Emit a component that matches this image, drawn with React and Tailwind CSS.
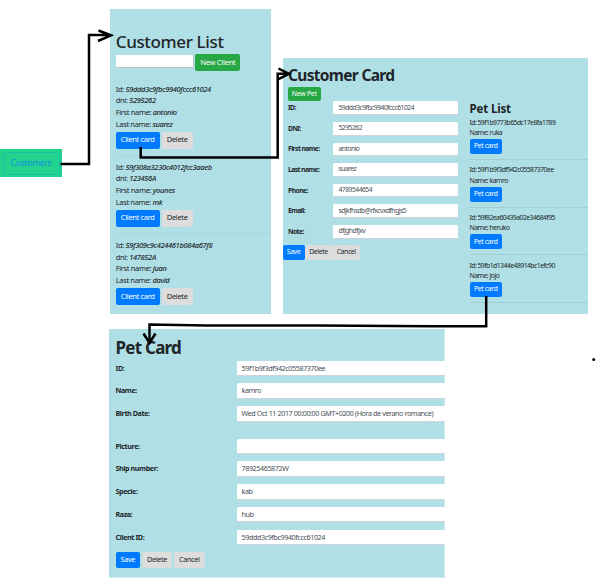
import React from 'react';

const customers = [
  { id: '59ddd3c9fbc9940fccc61024', dni: '5295262', first: 'antonio', last: 'suarez' },
  { id: '59f308a3230c4012fcc3aaeb', dni: '123456A', first: 'younes', last: 'mk' },
  { id: '59f309c9c424461b084a67f8', dni: '147852A', first: 'juan', last: 'david' },
];

const customerFields = [
  ['ID:', '59ddd3c9fbc9940fccc61024'],
  ['DNI:', '5295262'],
  ['First name:', 'antonio'],
  ['Last name:', 'suarez'],
  ['Phone:', '4789544654'],
  ['Email:', 'sdjkfhsdb@rfxcvxdfhgjs5'],
  ['Note:', 'dfjghdfjxv'],
];

const pets = [
  ['59f1b9773b65dc17e8fa1789', 'ruka'],
  ['59f1b9f3df942c05587370ee', 'kamro'],
  ['59f82ea60439a02e34684f95', 'heruko'],
  ['59fb1d1344e48914bc1efc90', 'jojo'],
];

const petFields = [
  ['ID:', '59f1b9f3df942c05587370ee'],
  ['Name:', 'kamro'],
  ['Birth Date:', 'Wed Oct 11 2017 00:00:00 GMT+0200 (Hora de verano romance)'],
  ['Picture:', ''],
  ['Ship number:', '78925465872W'],
  ['Specie:', 'kab'],
  ['Raza:', 'hub'],
  ['Client ID:', '59ddd3c9fbc9940fccc61024'],
];

const tones = {
  blue: 'bg-[#007bff] text-white',
  green: 'bg-[#28a745] text-white',
  gray: 'bg-[#dddddd] text-[#212529]',
};

function Button({ tone, className, children }) {
  return (
    <button className={`flex shrink-0 items-center justify-center rounded-[2px] whitespace-nowrap ${tones[tone]} ${className}`}>
      {children}
    </button>
  );
}

function CustomerList() {
  return (
    <section className="absolute left-[110px] top-[9px] h-[305px] w-[161px] bg-[#b0e0e6] pl-[5.7px] text-[7.5px]">
      <h1 className="mt-[19.5px] h-[25.5px] text-[17px] leading-[25px] font-medium tracking-[-0.35px] whitespace-nowrap">Customer List</h1>
      <div className="flex items-start gap-[1.7px]">
        <input className="mt-[1px] h-[13px] w-[78px] border-r border-b border-[#b9c2c4] bg-white outline-none" />
        <Button tone="green" className="h-[17px] w-[45px] tracking-[-0.25px]">New Client</Button>
      </div>
      <div className="mt-[12.5px]">
        {customers.map((c) => (
          <article key={c.id} className="h-[78.2px] leading-[11.8px] whitespace-nowrap tracking-[-0.34px] last:h-[66px] last:overflow-hidden">
            <p>Id: <i className="font-medium">{c.id}</i></p>
            <p>dni: <i className="font-medium">{c.dni}</i></p>
            <p>First name: <i className="font-medium">{c.first}</i></p>
            <p>Last name: <i className="font-medium">{c.last}</i></p>
            <div className="mt-[1px] flex gap-[2px]">
              <Button tone="blue" className="h-[17px] w-[44px]">Client card</Button>
              <Button tone="gray" className="h-[17px] w-[31px]">Delete</Button>
            </div>
            <hr className="mt-[6.5px] border-[#a8d8de]" />
          </article>
        ))}
      </div>
    </section>
  );
}

function CustomerCard() {
  return (
    <section className="absolute left-[282.5px] top-[58px] h-[256px] w-[305.5px] bg-[#b0e0e6] text-[6.8px]">
      <h1 className="h-[28.5px] pt-[6px] pl-[5.5px] text-[15.5px] leading-[22px] font-bold whitespace-nowrap tracking-[-0.68px]">Customer Card</h1>
      <div className="flex">
        <div className="w-[187px]">
          <Button tone="green" className="ml-[5.5px] h-[14.7px] w-[32.5px] tracking-[-0.2px]">New Pet</Button>
          <div className="mt-[0.3px] flex flex-col gap-[7.1px]">
            {customerFields.map(([label, value]) => (
              <label key={label} className="flex h-[13.5px] items-center pl-[5.5px]">
                <span className="w-[45px] shrink-0 font-bold tracking-[-0.58px] whitespace-nowrap">{label}</span>
                <span className="flex h-[13.5px] w-[124.5px] items-center rounded-[1.5px] border-b border-[#ced4da] bg-white pl-[5.5px] tracking-[-0.53px] text-[#495057]">{value}</span>
              </label>
            ))}
          </div>
          <div className="mt-[6.2px] flex">
            <Button tone="blue" className="h-[15px] w-[22.3px] tracking-[-0.25px]">Save</Button>
            <Button tone="gray" className="h-[15px] w-[27.5px] tracking-[-0.35px]">Delete</Button>
            <Button tone="gray" className="h-[15px] w-[27.8px] tracking-[-0.35px]">Cancel</Button>
          </div>
        </div>
        <div className="min-w-0 flex-1 pt-[14.5px]">
          <h2 className="h-[16.5px] text-[11.5px] leading-[16px] font-bold whitespace-nowrap tracking-[-0.15px]">Pet List</h2>
          {pets.map(([id, name]) => (
            <div key={id} className="h-[47.7px] leading-[10.5px] whitespace-nowrap tracking-[-0.3px]">
              <p className="tracking-[-0.52px]">Id: {id}</p>
              <p className="tracking-[-0.45px]">Name: {name}</p>
              <Button tone="blue" className="mt-[0.5px] h-[15px] w-[32.5px]">Pet card</Button>
              <hr className="mt-[5px] border-[#a0d0d6]" />
            </div>
          ))}
        </div>
      </div>
    </section>
  );
}

function PetCard() {
  return (
    <section className="absolute left-[109px] top-[329px] h-[249px] w-[336px] border-r border-b border-[#cfebef] bg-[#b0e0e6] text-[7.2px]">
      <h1 className="h-[31.5px] pt-[6.5px] pl-[6.5px] text-[17px] leading-[24px] font-bold whitespace-nowrap tracking-[-0.75px]">Pet Card</h1>
      {petFields.map(([label, value]) => (
        <label key={label} className={`flex items-start pl-[6.5px] ${label === 'Birth Date:' ? 'h-[32.5px]' : 'h-[22.75px]'}`}>
          <span className="w-[121px] shrink-0 leading-[15.5px] font-bold tracking-[-0.42px]">{label}</span>
          <span className="mr-[-1px] h-[15.5px] flex-1 rounded-l-[1.5px] border-b border-[#ced4da] bg-white pl-[5px] leading-[15.5px] tracking-[-0.41px] whitespace-nowrap text-[#495057]">{value}</span>
        </label>
      ))}
      <div className="mt-[-0.5px] flex gap-[2px] pl-[6.5px] tracking-[-0.3px]">
        <Button tone="blue" className="h-[16px] w-[24.5px]">Save</Button>
        <Button tone="gray" className="h-[16px] w-[30px]">Delete</Button>
        <Button tone="gray" className="h-[16px] w-[30.5px]">Cancel</Button>
      </div>
    </section>
  );
}

function Arrows() {
  return (
    <svg className="pointer-events-none absolute inset-0" width="597" height="586" fill="none" stroke="#000" strokeWidth="2.5">
      <path d="M60.5 164H89V35H110M98.500 30.500L111 35.300L98 41" />
      <path d="M140.700 147V157.500H277.700V73.800H288M278.500 68.500L289 73.800L278.500 79.200" />
      <path d="M486.200 296V326.200H431L318 325.500H206L149.500 324.500V343" />
      <path d="M143.500 333.500L149.500 343L155.500 333.500" />
      <circle cx="593.700" cy="359.500" r="1.500" fill="#000" stroke="none" />
    </svg>
  );
}

export default function App() {
  return (
    <main className="relative h-[586px] w-[597px] overflow-hidden bg-white font-['Noto_Sans','Open_Sans',sans-serif] text-[#212529]">
      <nav className="absolute left-0 top-[149px] h-[28px] w-[61.5px] bg-[#22d38e] pt-[2.5px] pl-[2.5px]">
        <a className="flex h-[23px] w-[57px] items-center justify-center rounded-[2px] border border-[#1bbfa4] text-[8.5px] tracking-[-0.3px] text-[#148fe0]">Customers</a>
      </nav>
      <CustomerList />
      <CustomerCard />
      <PetCard />
      <Arrows />
    </main>
  );
}
